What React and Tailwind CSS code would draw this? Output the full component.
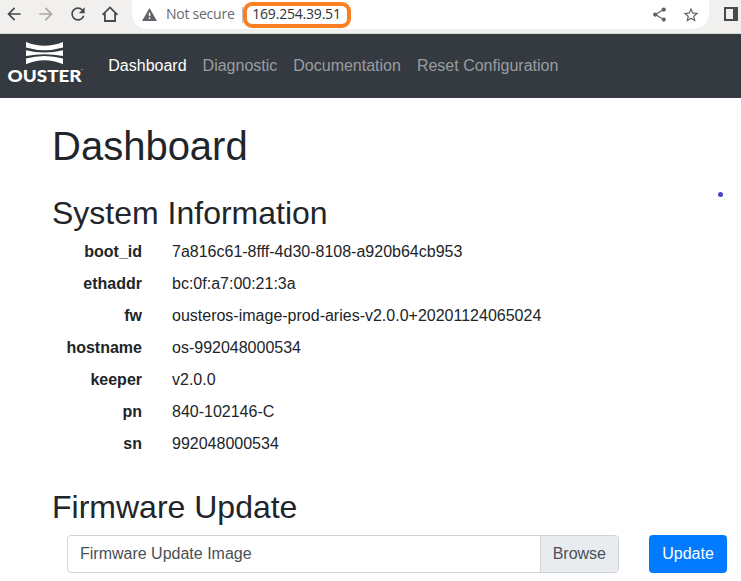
const info = [
  ['boot_id', '7a816c61-8fff-4d30-8108-a920b64cb953'],
  ['ethaddr', 'bc:0f:a7:00:21:3a'],
  ['fw', 'ousteros-image-prod-aries-v2.0.0+20201124065024'],
  ['hostname', 'os-992048000534'],
  ['keeper', 'v2.0.0'],
  ['pn', '840-102146-C'],
  ['sn', '992048000534'],
];

function Icon({ d, className }) {
  return (
    <svg viewBox="0 0 24 24" fill="currentColor" className={className}>
      <path d={d} />
    </svg>
  );
}

function BrowserBar() {
  return (
    <div className="flex h-[34px] items-start border-b border-[#d5dad5] bg-[#f1f0ee] text-[#4a4a4a]">
      <div className="flex h-7 w-[132px] shrink-0 items-center gap-3 pl-1">
        <Icon className="size-5 shrink-0" d="M20 11H7.83l5.59-5.59L12 4l-8 8 8 8 1.41-1.41L7.83 13H20v-2z" />
        <Icon className="size-5 shrink-0 text-[#a9a8a6]" d="M12 4l-1.41 1.41L16.17 11H4v2h12.17l-5.58 5.59L12 20l8-8z" />
        <Icon className="size-5 shrink-0" d="M17.65 6.35C16.2 4.9 14.21 4 12 4c-4.42 0-7.99 3.58-7.99 8s3.57 8 7.99 8c3.73 0 6.84-2.55 7.73-6h-2.08c-.82 2.33-3.04 4-5.65 4-3.31 0-6-2.69-6-6s2.69-6 6-6c1.66 0 3.14.69 4.22 1.78L13 11h7V4l-2.35 2.35z" />
        <svg viewBox="0 0 20 20" className="size-5 shrink-0" fill="none" stroke="currentColor" strokeWidth="1.8">
          <path d="M2.5 10.8 10 3.4l7.5 7.4M4.9 9v8h10.2V9" />
        </svg>
      </div>
      <div className="flex h-[29px] w-[577px] shrink-0 items-center rounded-b-[15px] bg-white pr-[9px] pl-[10px] font-['Open_Sans','Noto_Sans',sans-serif] text-[14px]">
        <svg viewBox="0 0 16 14" className="mr-[9px] h-[13px] w-[15px] shrink-0">
          <path d="M8 0 16 14H0z" fill="#5f6368" />
          <path d="M7.2 5h1.7v4H7.2zM7.2 10.2h1.7v1.7H7.2z" fill="#fff" />
        </svg>
        <span className="w-[76px] pb-[2px] whitespace-nowrap tracking-[-0.25px] text-[#66696d]">Not secure</span>
        <span className="h-4 w-px bg-[#bfc1c4]" />
        <span className="flex h-[26px] w-[108px] items-center justify-center rounded-[9px] border-[4px] border-[#fb8023] pr-px pb-[2px] tracking-[-0.2px] text-[#303236]">
          169.254.39.51
        </span>
        <span className="flex-1" />
        <Icon className="mr-[14.5px] size-[17px] text-[#5f6368]" d="M18 16.08c-.76 0-1.44.3-1.96.77L8.91 12.7c.05-.23.09-.46.09-.7s-.04-.47-.09-.7l7.05-4.11c.54.5 1.25.81 2.04.81 1.66 0 3-1.34 3-3s-1.34-3-3-3-3 1.34-3 3c0 .24.04.47.09.7L8.04 9.81C7.5 9.31 6.79 9 6 9c-1.66 0-3 1.34-3 3s1.34 3 3 3c.79 0 1.5-.31 2.04-.81l7.12 4.16c-.05.21-.08.43-.08.65 0 1.61 1.31 2.92 2.92 2.92s2.92-1.31 2.92-2.92-1.31-2.92-2.92-2.92z" />
        <Icon className="size-[18px] text-[#5f6368]" d="M22 9.24l-7.19-.62L12 2 9.19 8.63 2 9.24l5.46 4.73L5.82 21 12 17.27 18.18 21l-1.63-7.03L22 9.24zM12 15.4l-3.76 2.27 1-4.28-3.32-2.88 4.38-.38L12 6.1l1.71 4.04 4.38.38-3.32 2.88 1 4.28L12 15.4z" />
      </div>
      <svg viewBox="0 0 14 14" className="mt-[7px] ml-[15px] h-[14px] w-[14px] shrink-0">
        <path d="M0 0h14v14H0zM2 2v10h7V2z" fill="#4a4a4a" fillRule="evenodd" />
      </svg>
    </div>
  );
}

function Logo() {
  return (
    <svg viewBox="0 0 78 42" className="h-[42px] w-[78px] shrink-0 overflow-visible" fill="#fff">
      <path d="M18 0Q36.5 7.6 55 0v5.6Q36.5 11 18 5.6z" />
      <path d="M18 8.2Q36.5 13 55 8.2v5.9Q36.5 10.2 18 14.1z" />
      <path d="M18 16.6Q36.5 11.2 55 16.6v5.6Q36.5 14.4 18 22.2z" />
      <text x="-0.5" y="40" fontFamily="Lato, sans-serif" fontWeight="900" fontSize="17" textLength="74" lengthAdjust="spacingAndGlyphs">OUSTER</text>
      <text x="73" y="30" fontFamily="Inter, sans-serif" fontSize="3">™</text>
    </svg>
  );
}

export default function App() {
  return (
    <div className="relative h-[581px] w-[741px] overflow-hidden bg-white font-['Liberation_Sans',Arial,sans-serif] text-base text-[#212529]">
      <BrowserBar />
      <nav className="flex h-16 items-start bg-[#343a40] pt-2 pl-2 text-[#9a9da0]">
        <Logo />
        <div className="ml-[22.3px] flex h-12 items-center gap-4 whitespace-nowrap">
          <a className="text-white">Dashboard</a>
          <a>Diagnostic</a>
          <a>Documentation</a>
          <a>Reset Configuration</a>
        </div>
      </nav>
      <main className="pt-6 pl-[52px]">
        <h1 className="text-[40px] leading-[48px]">Dashboard</h1>
        <h2 className="mt-6 text-[32px] leading-[38px]">System Information</h2>
        <dl className="mt-2">
          {info.map(([name, value]) => (
            <div key={name} className="flex h-8 items-start leading-6">
              <dt className="w-[90px] text-right font-bold">{name}</dt>
              <dd className="ml-[30px]">{value}</dd>
            </div>
          ))}
        </dl>
        <h2 className="mt-6 text-[32px] leading-[38px]">Firmware Update</h2>
        <div className="mt-[9px] ml-[15px] flex">
          <div className="flex h-[38px] w-[552px] items-stretch overflow-hidden rounded border border-[#ced4da] leading-6 text-[#495057]">
            <span className="flex flex-1 items-center pl-3">Firmware Update Image</span>
            <span className="flex items-center border-l border-[#ced4da] bg-[#e9ecef] px-3">Browse</span>
          </div>
          <button className="ml-[30px] h-[38px] w-[78px] rounded bg-[#007bff] text-white">Update</button>
        </div>
      </main>
      <span className="absolute top-[192px] left-[718px] size-[5px] rounded-full bg-[#4545d0]" />
    </div>
  );
}
